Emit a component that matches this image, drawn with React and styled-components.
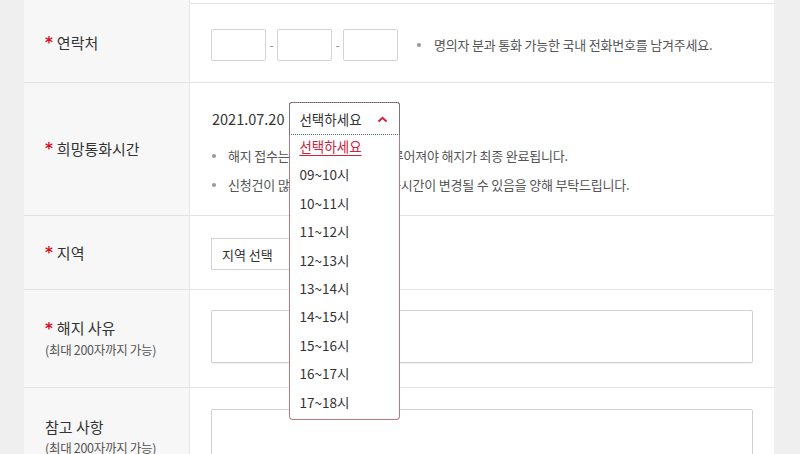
import React from 'react'
import styled, { createGlobalStyle } from 'styled-components'

const GlobalStyle = createGlobalStyle`
  html, body {
    margin: 0;
    padding: 0;
    background: #efefef;
    font-family: "Noto Sans CJK KR", "Noto Sans", sans-serif;
    color: #333;
  }
  * { box-sizing: border-box; }
`

const TIMES = ['09~10시', '10~11시', '11~12시', '12~13시', '13~14시', '14~15시', '15~16시', '16~17시', '17~18시']

function App() {
  return (
    <>
      <GlobalStyle />
      <Page>
        <Table>
          <Row height={3}>
            <Label />
            <Cell />
          </Row>

          <Row height={78}>
            <Label><Star>*</Star>연락처</Label>
            <Cell center>
              <PhoneInput />
              <Dash>-</Dash>
              <PhoneInput />
              <Dash>-</Dash>
              <PhoneInput />
              <InlineNote>명의자 분과 통화 가능한 국내 전화번호를 남겨주세요.</InlineNote>
            </Cell>
          </Row>

          <Row height={132}>
            <Label><Star>*</Star>희망통화시간</Label>
            <Cell>
              <DateLine>
                <DateText>2021.07.20</DateText>
                <SelectWrap>
                  <SelectHead>
                    선택하세요
                    <svg width="11" height="7" viewBox="0 0 11 7">
                      <path d="M1.5 5.5 L5.5 1.8 L9.5 5.5" fill="none" stroke="#d4213a" strokeWidth="2" />
                    </svg>
                  </SelectHead>
                  <OptionList>
                    <Option selected>선택하세요</Option>
                    {TIMES.map((t) => (
                      <Option key={t}>{t}</Option>
                    ))}
                  </OptionList>
                </SelectWrap>
              </DateLine>
              <Notes>
                <Note>해지 접수는 명의자와 통화가 이루어져야 해지가 최종 완료됩니다.</Note>
                <Note>신청건이 많을 경우에는 희망통화시간이 변경될 수 있음을 양해 부탁드립니다.</Note>
              </Notes>
            </Cell>
          </Row>

          <Row height={73}>
            <Label><Star>*</Star>지역</Label>
            <Cell center>
              <RegionSelect>지역 선택</RegionSelect>
            </Cell>
          </Row>

          <Row height={97}>
            <Label column>
              <span><Star>*</Star>해지 사유</span>
              <SubLabel>(최대 200자까지 가능)</SubLabel>
            </Label>
            <Cell top={20}>
              <TextArea />
            </Cell>
          </Row>

          <Row height={100}>
            <Label column top={28}>
              <span>참고 사항</span>
              <SubLabel>(최대 200자까지 가능)</SubLabel>
            </Label>
            <Cell top={21}>
              <TextArea />
            </Cell>
          </Row>
        </Table>
      </Page>
    </>
  )
}

const Page = styled.div`
  width: 800px;
  height: 454px;
  overflow: hidden;
  padding-left: 24px;
`

const Table = styled.div`
  width: 750px;
  background: #fff;
`

const Row = styled.div`
  display: grid;
  grid-template-columns: 166px 1fr;
  height: ${(p) => p.height + 1}px;
  border-bottom: 1px solid #e3e3e3;
`

const Label = styled.div`
  background: #f7f7f7;
  border-right: 1px solid #e8e8e8;
  padding-left: 21px;
  display: flex;
  flex-direction: ${(p) => (p.column ? 'column' : 'row')};
  justify-content: ${(p) => (p.column && !p.top ? 'center' : 'flex-start')};
  align-items: ${(p) => (p.column ? 'flex-start' : 'center')};
  ${(p) => p.top && `padding-top: ${p.top}px;`}
  font-size: 15px;
  color: #333;
  line-height: 22px;
`

const Star = styled.span`
  color: #d4111f;
  font-weight: bold;
  margin-right: 4px;
  font-family: "DejaVu Sans", sans-serif;
  font-size: 15px;
`

const SubLabel = styled.span`
  font-size: 12.5px;
  color: #555;
  line-height: 20px;
  letter-spacing: -0.3px;
`

const Cell = styled.div`
  padding-left: 21px;
  padding-top: ${(p) => (p.top ? p.top : 19)}px;
  display: flex;
  flex-direction: ${(p) => (p.center ? 'row' : 'column')};
  align-items: ${(p) => (p.center ? 'center' : 'flex-start')};
  ${(p) => p.center && 'padding-top: 3px;'}
`

const PhoneInput = styled.div`
  width: 55px;
  height: 32px;
  border: 1px solid #d4d4d4;
  border-radius: 2px;
  background: #fff;
`

const Dash = styled.span`
  width: 11px;
  text-align: center;
  font-size: 12px;
  color: #888;
`

const InlineNote = styled.span`
  margin-left: 19px;
  font-size: 13px;
  letter-spacing: -0.2px;
  color: #555;
  position: relative;
  padding-left: 17px;
  &::before {
    content: '';
    position: absolute;
    left: 0;
    top: 50%;
    width: 4px;
    height: 4px;
    margin-top: -2px;
    border-radius: 50%;
    background: #999;
  }
`

const DateLine = styled.div`
  display: flex;
  align-items: center;
  height: 33px;
`

const DateText = styled.span`
  font-size: 14.5px;
  color: #333;
  margin-right: 5px;
  margin-left: 1px;
`

const SelectWrap = styled.div`
  position: relative;
  width: 111px;
  height: 33px;
`

const SelectHead = styled.div`
  height: 33px;
  border: 1px solid #b47a80;
  border-bottom: none;
  border-radius: 3px 3px 0 0;
  outline: 1px dotted #4f6f70;
  outline-offset: -1px;
  display: flex;
  align-items: center;
  justify-content: space-between;
  padding: 0 11px 0 9px;
  font-size: 13.5px;
  color: #333;
  background: #fff;
`

const OptionList = styled.div`
  position: absolute;
  top: 33px;
  left: 0;
  width: 111px;
  background: #fff;
  border: 1px solid #b47a80;
  border-top: none;
  border-radius: 0 0 4px 4px;
  z-index: 5;
`

const Option = styled.div`
  height: 28.4px;
  line-height: 23px;
  padding-left: 9px;
  font-size: 13.5px;
  color: ${(p) => (p.selected ? '#d4213a' : '#333')};
  text-decoration: ${(p) => (p.selected ? 'underline' : 'none')};
  text-underline-offset: 3px;
`

const Notes = styled.ul`
  list-style: none;
  margin: 6px 0 0;
  padding: 0;
`

const Note = styled.li`
  position: relative;
  padding-left: 17px;
  font-size: 13px;
  letter-spacing: -0.2px;
  color: #555;
  line-height: 29px;
  &::before {
    content: '';
    position: absolute;
    left: 1px;
    top: 13px;
    width: 4px;
    height: 4px;
    border-radius: 50%;
    background: #999;
  }
`

const RegionSelect = styled.div`
  width: 80px;
  height: 32px;
  border: 1px solid #d4d4d4;
  display: flex;
  align-items: center;
  padding-left: 10px;
  font-size: 13px;
  color: #333;
`

const TextArea = styled.div`
  width: 542px;
  height: 53px;
  border: 1px solid #d0d0d0;
  border-radius: 2px;
  box-shadow: 0 1px 1px rgba(0, 0, 0, 0.06);
  background: #fff;
`

export default App
